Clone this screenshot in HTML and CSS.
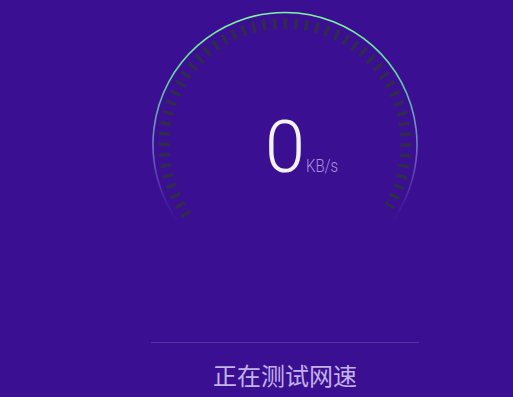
FILE: index.html
```html
<!DOCTYPE html>
<html lang="zh">
<head>
<meta charset="utf-8">
<title>测速</title>
<link rel="stylesheet" href="styles.css">
</head>
<body>
<div class="main">
  <div class="gauge">
    <svg class="dial" width="268" height="230" viewBox="0 0 268 230">
      <defs>
        <linearGradient id="rim" gradientUnits="userSpaceOnUse" x1="0" y1="12" x2="0" y2="222">
          <stop offset="0" stop-color="#82f5a0"/>
          <stop offset="0.3" stop-color="#5ed7a0"/>
          <stop offset="0.62" stop-color="#7a8fcc" stop-opacity="0.85"/>
          <stop offset="1" stop-color="#6a5ac0" stop-opacity="0"/>
        </linearGradient>
      </defs>
      <path d="M25.9 220.2 A132 132 0 1 1 242.1 220.2" fill="none" stroke="url(#rim)" stroke-width="1.6"/>
      <path d="M35.86 215.28 A121 121 0 1 1 237.90 206.51" fill="none" stroke="#2f2c4f" stroke-width="11" stroke-dasharray="3.5 7.059"/>
    </svg>
    <div class="readout">
      <span class="num">0</span><span class="unit">KB/s</span>
    </div>
  </div>
  <div class="divider"></div>
  <div class="status">正在测试网速</div>
</div>
</body>
</html>
```
FILE: styles.css
```css
html, body {
  margin: 0;
  padding: 0;
}
body {
  width: 513px;
  height: 397px;
  overflow: hidden;
  background: #3b0f91;
  font-family: Roboto, "Noto Sans CJK SC", sans-serif;
}
.main {
  margin-left: 151px;
  width: 268px;
  display: flex;
  flex-direction: column;
}
.gauge {
  position: relative;
  height: 230px;
}
.dial {
  display: block;
}
.readout {
  position: absolute;
  left: 114px;
  top: 112px;
  display: flex;
  align-items: baseline;
}
.num {
  font-size: 72px;
  font-weight: 300;
  line-height: 1;
  color: #f4f2f8;
}
.unit {
  font-size: 18px;
  font-weight: 300;
  line-height: 1;
  color: #a993dc;
  margin-left: 1px;
  transform: scaleX(0.83);
  transform-origin: left bottom;
}
.divider {
  margin-top: 112px;
  height: 1px;
  background: #5634a6;
}
.status {
  margin-top: 14px;
  font-family: "Noto Sans CJK SC", sans-serif;
  font-size: 24px;
  line-height: 36px;
  text-align: center;
  color: #c2b2ea;
}
```
